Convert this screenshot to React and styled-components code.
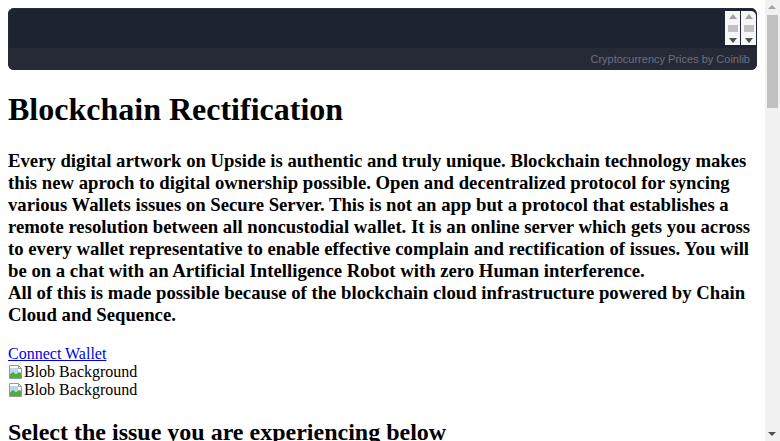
import React from 'react';
import styled, { createGlobalStyle } from 'styled-components';

const Global = createGlobalStyle`
    html {
        scrollbar-width: none;
    }
    body {
        margin: 8px 23px 8px 8px;
        font-family: "Liberation Serif", "Times New Roman", serif;
        color: #000;
        background: #fff;
    }
`;

// the window's scrollbar, drawn over the right edge
const PageScroll = styled.div`
    position: fixed;
    top: 0;
    right: 0;
    width: 15px;
    height: 100vh;
    background: #f1f1f1;
    > i {
        position: absolute;
        left: 2px;
        top: 15px;
        width: 11px;
        height: 93px;
        background: #c1c1c1;
    }
    > span {
        position: absolute;
        left: 3px;
        width: 0;
        height: 0;
        border-left: 4.5px solid transparent;
        border-right: 4.5px solid transparent;
    }
    > span:first-child { top: 5px; border-bottom: 4px solid #a3a3a3; }
    > span:last-child { bottom: 5px; border-top: 4px solid #505050; }
`;

const Ticker = styled.div`
    height: 62px;
    border-radius: 6px;
    overflow: hidden;
    background-color: #1e2331;
    display: flex;
    flex-direction: column;
`;

const TickerBody = styled.div`
    flex: 1;
    display: flex;
    justify-content: flex-end;
    align-items: flex-start;
    padding: 2px 1px 0 0;
    border-top: 1px solid #262b3a;
    border-left: 2px solid #232838;
`;

const MiniScroll = styled.div`
    width: 15px;
    height: 34px;
    margin-left: 1px;
    background: #f6f6f6;
    border-top-right-radius: ${p => (p.last ? '5px' : '0')};
    display: flex;
    flex-direction: column;
    align-items: center;
    justify-content: space-between;
    padding: 3px 0 2px;
    box-sizing: border-box;
    > span {
        width: 0;
        height: 0;
        border-left: 4px solid transparent;
        border-right: 4px solid transparent;
    }
    > span:first-child { border-bottom: 5px solid #a3a3a3; }
    > span:last-child { border-top: 5px solid #505050; }
    > i {
        width: 10px;
        height: 7px;
        background: #c1c1c1;
    }
`;

const TickerFoot = styled.div`
    height: 22px;
    background-color: #262a36;
    display: flex;
    align-items: center;
    justify-content: flex-end;
    padding-right: 7px;
    font-family: "Liberation Sans", Arial, sans-serif;
    font-size: 11px;
    color: #6b7080;
`;

const Title = styled.h1`
    font-size: 2em;
    margin: 0.67em 0;
`;

const Intro = styled.h3`
    font-size: 1.17em;
    line-height: 22px;
    margin: 1em 0;
`;

const WalletLink = styled.a`
    color: #0000ee;
    text-decoration: underline;
    cursor: pointer;
`;

const Broken = styled.div`
    display: flex;
    align-items: flex-end;
    height: 18px;
    > svg {
        margin-bottom: 1px;
    }
`;

const Subtitle = styled.h2`
    font-size: 1.5em;
    margin: 0.83em 0;
`;

const IssueList = styled.div`
    display: grid;
    grid-template-columns: repeat(2, 1fr);
    gap: 20px;
    padding-bottom: 40px;
`;

const Issue = styled.div`
    height: 110px;
    border: 1px solid #ccc;
    padding: 10px;
    font-size: 18px;
    font-weight: bold;
`;

const BrokenIcon = () => (
    <svg width="16" height="16" viewBox="0 0 16 16">
        <path d="M1.5 1.5h9l3 3v10h-12z" fill="#fff" stroke="#9a9a9a" />
        <path d="M10.5 1.5v3h3" fill="none" stroke="#9a9a9a" />
        <path d="M2 4h8v5H2z" fill="#bcd6f0" />
        <path d="M2 14V10l3-2 3 2 3-2 2 1v5z" fill="#4caf3a" />
    </svg>
);

const issues = [
    'Migration', 'Claim Reward', 'Rectification', 'Validation', 'Staking', 'Swap / Exchange',
    'Bridge Transfer', 'Missing Funds', 'Whitelist', 'Slippage Error', 'Transaction Delay',
    'Login Issue', 'NFT Minting', 'Airdrop', 'Wallet Sync', 'High Gas Fee', 'Locked Account',
    'Buy Tokens', 'Connect to Dapps', 'Other Issues',
];

const App = () => {
    return (
        <>
            <Global />
            <PageScroll><span /><i /><span /></PageScroll>
            <Ticker>
                <TickerBody>
                    <MiniScroll><span /><i /><span /></MiniScroll>
                    <MiniScroll last><span /><i /><span /></MiniScroll>
                </TickerBody>
                <TickerFoot>Cryptocurrency Prices by Coinlib</TickerFoot>
            </Ticker>
            <Title>Blockchain Rectification</Title>
            <Intro>
                Every digital artwork on Upside is authentic and truly unique. Blockchain technology makes this new aproch to digital ownership possible. Open and decentralized protocol for syncing various Wallets issues on Secure Server. This is not an app but a protocol that establishes a remote resolution between all noncustodial wallet. It is an online server which gets you across to every wallet representative to enable effective complain and rectification of issues. You will be on a chat with an Artificial Intelligence Robot with zero Human interference.
                <br />
                All of this is made possible because of the blockchain cloud infrastructure powered by Chain Cloud and Sequence.
            </Intro>
            <WalletLink>Connect Wallet</WalletLink>
            <Broken><BrokenIcon />Blob Background</Broken>
            <Broken><BrokenIcon />Blob Background</Broken>
            <Subtitle>Select the issue you are experiencing below</Subtitle>
            <IssueList>
                {issues.map(name => <Issue key={name}>{name}</Issue>)}
            </IssueList>
        </>
    );
};

export default App;
